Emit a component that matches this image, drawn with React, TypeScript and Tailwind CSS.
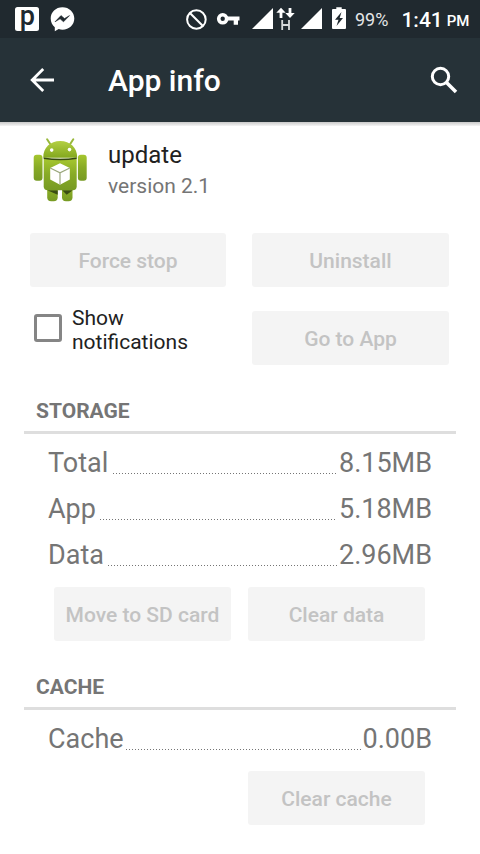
import type { ReactNode } from "react";

const storage = [
  { label: "Total", value: "8.15MB", gap: "ml-[5px] mr-[3px]" },
  { label: "App", value: "5.18MB", gap: "ml-[4px] mr-[4px]" },
  { label: "Data", value: "2.96MB", gap: "ml-[4px] mr-[2px]" },
];

function StatusBar() {
  return (
    <div className="flex h-[38px] items-start bg-[#20292f] pt-[7px] pl-[15px] text-white">
      <svg width="24" height="24" viewBox="0 0 24 24" className="shrink-0 overflow-visible">
        <rect width="24" height="24" rx="2.5" fill="#fff" />
        <text x="12.300" y="17.500" textAnchor="middle" fontFamily="Roboto, sans-serif" fontWeight="500" fontSize="27" fill="#20292f">p</text>
      </svg>
      <svg width="25" height="25" viewBox="0 0 25 25" className="ml-[11px] shrink-0" fill="#fff">
        <path d="M12.5.3C5.7.3.7 5.2.7 11.5c0 3.6 1.6 6.6 4.1 8.7v4l3.9-2.1c1.2.4 2.500.6 3.800.6 6.600 0 11.800-4.900 11.800-11.200S19.100.3 12.500.3z" />
        <path d="M5 14.800l6-6.200 3.500 3 5-3-6 6.200-3.400-3z" fill="#20292f" stroke="#20292f" strokeWidth=".6" />
      </svg>
      <svg width="22" height="24" viewBox="0 0 22 24" className="ml-[110px] shrink-0" fill="none" stroke="#fff" strokeWidth="2">
        <circle cx="11.400" cy="12.500" r="9.300" />
        <path d="M4.900 6l13 13" />
      </svg>
      <svg width="24" height="24" viewBox="0 0 24 24" className="ml-[9px] shrink-0">
        <circle cx="6.700" cy="11.800" r="4" fill="none" stroke="#fff" strokeWidth="3.600" />
        <path d="M11 9.600h12.500v4h-1.500v4.200h-4.300v-4.200H11z" fill="#fff" />
      </svg>
      <svg width="21" height="24" viewBox="0 0 21 24" className="ml-[12px] shrink-0" fill="#fff">
        <path d="M21 1v21H0z" />
      </svg>
      <svg width="19" height="24" viewBox="0 0 19 24" className="ml-[3px] shrink-0" fill="#fff">
        <path d="M5 .8L.3 5.700h3.300V11h2.800V5.700h3.300zM14 11l-4.700-4.900h3.300V1h2.800v5.100h3.300z" />
        <path d="M6.200 13v10M13 13v10M6.200 18h6.800" stroke="#d7dadb" strokeWidth="1.800" />
      </svg>
      <svg width="21" height="24" viewBox="0 0 21 24" className="ml-[6px] shrink-0" fill="#fff">
        <path d="M21 1v21H0z" />
      </svg>
      <svg width="14" height="24" viewBox="0 0 14 24" className="ml-[10px] shrink-0">
        <path d="M4.300.3h5.400V2h3.300q1 0 1 1v18q0 1-1 1H1q-1 0-1-1V3q0-1 1-1h3.300z" fill="#fff" />
        <path d="M9.500 5L3 12.800h3.500L4.500 19l6.500-8H7.700z" fill="#20292f" />
      </svg>
      <span className="ml-[9px] text-[18px] leading-[26px] text-[#e4e6e7]">99%</span>
      <span className="ml-[13px] text-[21px] leading-[26px] font-medium">1:41</span>
      <span className="ml-[4px] text-[15px] leading-[29px] font-medium">PM</span>
    </div>
  );
}

function AndroidIcon() {
  return (
    <svg width="56" height="66" viewBox="0 0 56 66" className="shrink-0">
      <defs>
        <linearGradient id="head" x1="0" y1="0" x2="0" y2="1">
          <stop offset="0" stopColor="#b3cf43" />
          <stop offset="1" stopColor="#83a81e" />
        </linearGradient>
        <linearGradient id="body" x1="0" y1="0" x2="0" y2="1">
          <stop offset="0" stopColor="#a5c62f" />
          <stop offset=".5" stopColor="#87aa26" />
          <stop offset="1" stopColor="#779a23" />
        </linearGradient>
      </defs>
      <g transform="translate(.7 .8)">
        <path d="M18 7l-3.600-5.500M37 7l3.600-5.500" stroke="#98b83b" strokeWidth="2" strokeLinecap="round" />
        <g fill="url(#body)">
          <rect x="14.500" y="45" width="10.500" height="18.500" rx="4" />
          <rect x="29.300" y="45" width="10.500" height="18.500" rx="4" />
          <rect x="1" y="17" width="8.800" height="26" rx="3" />
          <rect x="45.200" y="17" width="8.800" height="26" rx="3" />
        </g>
        <path d="M14.500 52.500h10.500v4.500zM29.500 52.500h10.500l-6 4.500z" fill="#3a4c13" />
        <path d="M11 21h33v27.500q0 4-4 4H15q-4 0-4-4z" fill="url(#body)" />
        <path d="M10.500 20C10.500 10 17.500 3.300 27.500 3.300S44.500 10 44.500 20z" fill="url(#head)" />
        <path d="M11 20.500q16.500 2.400 33 0" fill="none" stroke="#34470e" strokeWidth="1.500" />
        <circle cx="19" cy="12.300" r="1.800" fill="#fff" />
        <circle cx="36.800" cy="11.800" r="1.800" fill="#fff" />
        <path d="M27.300 25.500l9.800 4.700v11.600l-9.800 5.200-9.800-5.200V30.200z" fill="#fff" />
        <path d="M17.500 30.200l9.800 4.800 9.800-4.800M27.300 35v12" fill="none" stroke="#9aa77b" strokeWidth="1.200" />
      </g>
    </svg>
  );
}

function Button({ children, className }: { children: ReactNode; className: string }) {
  return (
    <button disabled className={`h-[54px] shrink-0 whitespace-nowrap rounded-[3px] bg-[#f4f4f4] pt-[3px] text-[21px] font-medium text-[#c3c3c3] ${className}`}>
      {children}
    </button>
  );
}

function SectionTitle({ children }: { children: ReactNode }) {
  return (
    <h2 className="mx-6 h-9 border-b-[3px] border-[#dedede] pl-3 text-[21px] leading-[26px] font-bold text-[#757575]">
      {children}
    </h2>
  );
}

function Row({ label, value, gap }: { label: string; value: string; gap: string }) {
  return (
    <div className="flex h-[46px] items-center px-12 text-[27px] text-[#757575]">
      <span>{label}</span>
      <span className={`mt-[21px] h-px flex-1 bg-[repeating-linear-gradient(90deg,#757575_0_1px,transparent_1px_3px)] ${gap}`} />
      <span>{value}</span>
    </div>
  );
}

export default function App() {
  return (
    <div className="h-[854px] w-[480px] overflow-hidden bg-white font-[Roboto,sans-serif]">
      <StatusBar />
      <header className="flex h-[84px] items-center bg-[#263238] pl-[30px] text-white">
        <svg width="24" height="24" viewBox="0 0 24 24" fill="none" stroke="#fff" strokeWidth="2.800">
          <path d="M24 12H2.500M13.200 1L2.200 12l11 11" />
        </svg>
        <h1 className="ml-[54px] flex-1 text-[30px] font-medium">App info</h1>
        <svg width="28" height="28" viewBox="0 0 28 28" className="mr-[22px]" fill="none" stroke="#fff">
          <circle cx="10.500" cy="10.500" r="8.200" strokeWidth="3" />
          <path d="M16.500 16.500l9.500 9.500" strokeWidth="3.600" />
        </svg>
      </header>
      <div className="h-1 bg-linear-to-b from-[#c9c9c9] to-[#f5f5f5]" />

      <div className="flex h-[107px] pt-[11px] pl-8">
        <AndroidIcon />
        <div className="ml-5 pt-[2px]">
          <p className="text-[24px] leading-[32px] text-[#212121]">update</p>
          <p className="text-[21px] leading-[30px] text-[#757575]">version 2.1</p>
        </div>
      </div>

      <div className="flex gap-[26px] pl-[30px]">
        <Button className="w-[196px]">Force stop</Button>
        <Button className="w-[197px]">Uninstall</Button>
      </div>
      <div className="mt-6 flex pl-[34px]">
        <label className="flex w-[218px] items-start">
          <span className="mt-[3px] h-[28px] w-[28px] rounded-[3px] border-[3px] border-[#858585]" />
          <span className="-mt-[5px] ml-[10px] text-[21px] leading-6 text-[#212121]">Show<br />notifications</span>
        </label>
        <Button className="w-[197px]">Go to App</Button>
      </div>

      <div className="mt-[33px]">
        <SectionTitle>STORAGE</SectionTitle>
      </div>
      <div className="pt-[6px]">
        {storage.map((row) => (
          <Row key={row.label} {...row} />
        ))}
      </div>
      <div className="mt-[9px] flex gap-[17px] pl-[54px]">
        <Button className="w-[177px]">Move to SD card</Button>
        <Button className="w-[177px]">Clear data</Button>
      </div>

      <div className="mt-[33px]">
        <SectionTitle>CACHE</SectionTitle>
      </div>
      <div className="pt-[6px]">
        <Row label="Cache" value="0.00B" gap="ml-[2px] mr-[2px]" />
      </div>
      <div className="mt-[9px] flex pl-[248px]">
        <Button className="w-[177px]">Clear cache</Button>
      </div>
    </div>
  );
}
